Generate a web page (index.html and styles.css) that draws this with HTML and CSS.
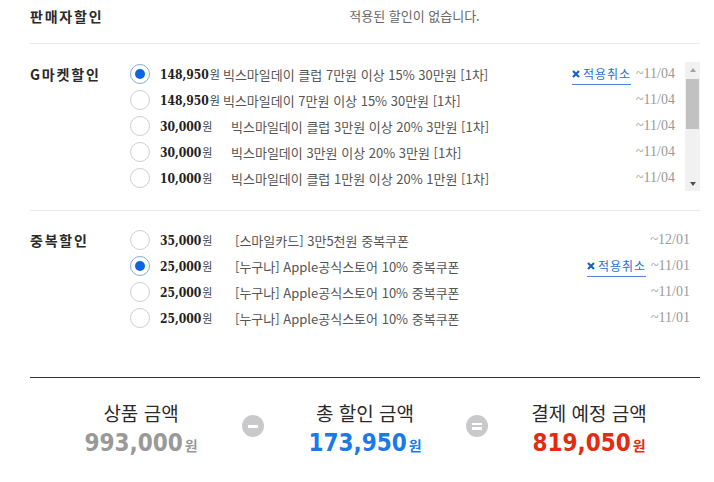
FILE: index.html
```html
<!DOCTYPE html>
<html lang="ko">
<head>
<meta charset="utf-8">
<title>할인 적용</title>
<link rel="stylesheet" href="styles.css">
</head>
<body>
<div class="page">
  <section class="sec sec-top">
    <h3 class="sec-label">판매자할인</h3>
    <p class="empty">적용된 할인이 없습니다.</p>
  </section>

  <section class="sec sec-gmarket">
    <h3 class="sec-label">G마켓할인</h3>
    <div class="list-box list-box-scroll">
      <ul class="list list-g">
        <li class="row">
          <span class="radio checked"></span>
          <span class="amt amt-long"><b>148,950</b>원</span>
          <span class="desc">빅스마일데이 클럽 7만원 이상 15% 30만원 [1차]</span>
          <a class="cancel" href="#"><svg class="x" viewBox="0 0 8 8" width="8" height="8"><path d="M1 1L7 7M7 1L1 7" /></svg>적용취소</a>
          <span class="date">~11/04</span>
        </li>
        <li class="row">
          <span class="radio"></span>
          <span class="amt amt-long"><b>148,950</b>원</span>
          <span class="desc">빅스마일데이 7만원 이상 15% 30만원 [1차]</span>
          <span class="date">~11/04</span>
        </li>
        <li class="row">
          <span class="radio"></span>
          <span class="amt"><b>30,000</b>원</span>
          <span class="desc">빅스마일데이 클럽 3만원 이상 20% 3만원 [1차]</span>
          <span class="date">~11/04</span>
        </li>
        <li class="row">
          <span class="radio"></span>
          <span class="amt"><b>30,000</b>원</span>
          <span class="desc">빅스마일데이 3만원 이상 20% 3만원 [1차]</span>
          <span class="date">~11/04</span>
        </li>
        <li class="row">
          <span class="radio"></span>
          <span class="amt"><b>10,000</b>원</span>
          <span class="desc">빅스마일데이 클럽 1만원 이상 20% 1만원 [1차]</span>
          <span class="date">~11/04</span>
        </li>
      </ul>
      <div class="scrollbar" aria-hidden="true">
        <span class="sb-btn"><i class="arr up"></i></span>
        <span class="sb-track"><span class="sb-thumb"></span></span>
        <span class="sb-btn"><i class="arr down"></i></span>
      </div>
    </div>
  </section>

  <section class="sec sec-dup">
    <h3 class="sec-label">중복할인</h3>
    <div class="list-box">
      <ul class="list list-d">
        <li class="row">
          <span class="radio"></span>
          <span class="amt"><b>35,000</b>원</span>
          <span class="desc">[스마일카드] 3만5천원 중복쿠폰</span>
          <span class="date">~12/01</span>
        </li>
        <li class="row">
          <span class="radio checked"></span>
          <span class="amt"><b>25,000</b>원</span>
          <span class="desc">[누구나] Apple공식스토어 10% 중복쿠폰</span>
          <a class="cancel" href="#"><svg class="x" viewBox="0 0 8 8" width="8" height="8"><path d="M1 1L7 7M7 1L1 7" /></svg>적용취소</a>
          <span class="date">~11/01</span>
        </li>
        <li class="row">
          <span class="radio"></span>
          <span class="amt"><b>25,000</b>원</span>
          <span class="desc">[누구나] Apple공식스토어 10% 중복쿠폰</span>
          <span class="date">~11/01</span>
        </li>
        <li class="row">
          <span class="radio"></span>
          <span class="amt"><b>25,000</b>원</span>
          <span class="desc">[누구나] Apple공식스토어 10% 중복쿠폰</span>
          <span class="date">~11/01</span>
        </li>
      </ul>
    </div>
  </section>

  <section class="summary">
    <div class="sum-col">
      <div class="sum-label">상품 금액</div>
      <div class="sum-val gray"><b>993,000</b><span>원</span></div>
    </div>
    <span class="op"><i class="bar"></i></span>
    <div class="sum-col">
      <div class="sum-label">총 할인 금액</div>
      <div class="sum-val blue"><b>173,950</b><span>원</span></div>
    </div>
    <span class="op op-eq"><i class="bar"></i><i class="bar"></i></span>
    <div class="sum-col">
      <div class="sum-label">결제 예정 금액</div>
      <div class="sum-val red"><b>819,050</b><span>원</span></div>
    </div>
  </section>
</div>
</body>
</html>
```

FILE: styles.css
```css
* { box-sizing: border-box; }

body {
  margin: 0;
  background: #fff;
  font-family: "Noto Sans CJK KR", sans-serif;
  color: #333;
}

.page {
  padding: 0 14px 0 30px;
}

.sec {
  display: flex;
  align-items: flex-start;
  border-bottom: 1px solid #e9e9e9;
}

.sec-label {
  flex: none;
  width: 99px;
  margin: 0;
  font-size: 14px;
  font-weight: 700;
  letter-spacing: 1.8px;
  line-height: 26px;
  color: #2a2a2a;
}

.sec-top {
  height: 44px;
  padding-top: 3px;
}

.empty {
  flex: 1;
  margin: 0;
  text-align: center;
  font-size: 13px;
  line-height: 26px;
  color: #666;
}

.sec-gmarket {
  padding: 17px 0 19px;
}

.sec-dup {
  border-bottom: none;
  padding: 16px 0 46px;
}

.list-box {
  flex: 1;
  display: flex;
}

.list-box-scroll {
  height: 130px;
}

.list {
  flex: 1;
  margin: 0;
  padding: 0 10px 0 1px;
  list-style: none;
  overflow: hidden;
}

.row {
  display: flex;
  align-items: center;
  height: 26px;
  white-space: nowrap;
}

.radio {
  flex: none;
  width: 20px;
  height: 20px;
  margin-right: 10px;
  border: 1px solid #cfcfcf;
  border-radius: 50%;
  background: #fff;
  display: flex;
  align-items: center;
  justify-content: center;
}

.radio.checked {
  border-color: #86a9dc;
}

.radio.checked::after {
  content: "";
  width: 10px;
  height: 10px;
  border-radius: 50%;
  background: #0b64e3;
}

.amt {
  flex: none;
  min-width: 68px;
  font-size: 11px;
  color: #444;
}

.amt.amt-long {
  min-width: 0;
}

.list-d .amt {
  min-width: 72px;
}

.amt b {
  font-family: "DejaVu Serif Condensed", "DejaVu Serif", serif;
  font-stretch: condensed;
  font-weight: 700;
  font-size: 12px;
  color: #222;
  margin-right: 1px;
}

.desc {
  flex: 1;
  margin-left: 3px;
  font-size: 13px;
  color: #555;
}

.cancel {
  display: flex;
  align-items: center;
  font-size: 12px;
  letter-spacing: 1px;
  line-height: 16px;
  color: #2c6fd4;
  text-decoration: none;
  border-bottom: 1px solid #4d88de;
  padding-bottom: 2px;
  margin-top: 3px;
}

.x {
  margin-right: 3px;
  stroke: #1f5fc4;
  stroke-width: 2.2;
  fill: none;
}

.date {
  flex: none;
  margin-left: 5px;
  font-family: "Liberation Serif", serif;
  font-size: 14px;
  color: #9a9a9a;
}

.scrollbar {
  flex: none;
  width: 15px;
  display: flex;
  flex-direction: column;
  background: #f1f1f1;
  margin-top: 1px;
}

.sb-btn {
  height: 15px;
  display: flex;
  align-items: center;
  justify-content: center;
}

.arr {
  width: 0;
  height: 0;
  border-left: 3.5px solid transparent;
  border-right: 3.5px solid transparent;
}

.arr.up {
  border-bottom: 4px solid #a3a3a3;
}

.arr.down {
  border-top: 4px solid #505050;
}

.sb-track {
  flex: 1;
  display: flex;
  flex-direction: column;
  padding: 2px 1px 0;
}

.sb-thumb {
  height: 50px;
  background: #c1c1c1;
}

.summary {
  display: flex;
  justify-content: center;
  align-items: flex-start;
  border-top: 1px solid #333;
  padding-top: 23px;
}

.sum-col {
  width: 180px;
  text-align: center;
}

.sum-label {
  font-size: 19px;
  line-height: 24px;
  color: #2a2a2a;
}

.sum-val {
  margin-top: 4px;
  line-height: 28px;
}

.sum-val b {
  font-family: "DejaVu Sans Condensed", "DejaVu Sans", sans-serif;
  font-stretch: condensed;
  font-weight: 700;
  font-size: 24px;
}

.sum-val span {
  font-size: 14px;
  font-weight: 700;
  margin-left: 2px;
}

.gray { color: #999; }
.blue { color: #1a7ae8; }
.red { color: #e32b12; }

.op {
  flex: none;
  width: 22px;
  height: 22px;
  margin: 14px 11px 0;
  border-radius: 50%;
  background: #c9c9cc;
  display: flex;
  flex-direction: column;
  align-items: center;
  justify-content: center;
  gap: 2px;
}

.op .bar {
  display: block;
  width: 10px;
  height: 3px;
  background: #fff;
}

.op-eq .bar {
  height: 2.5px;
}
```
